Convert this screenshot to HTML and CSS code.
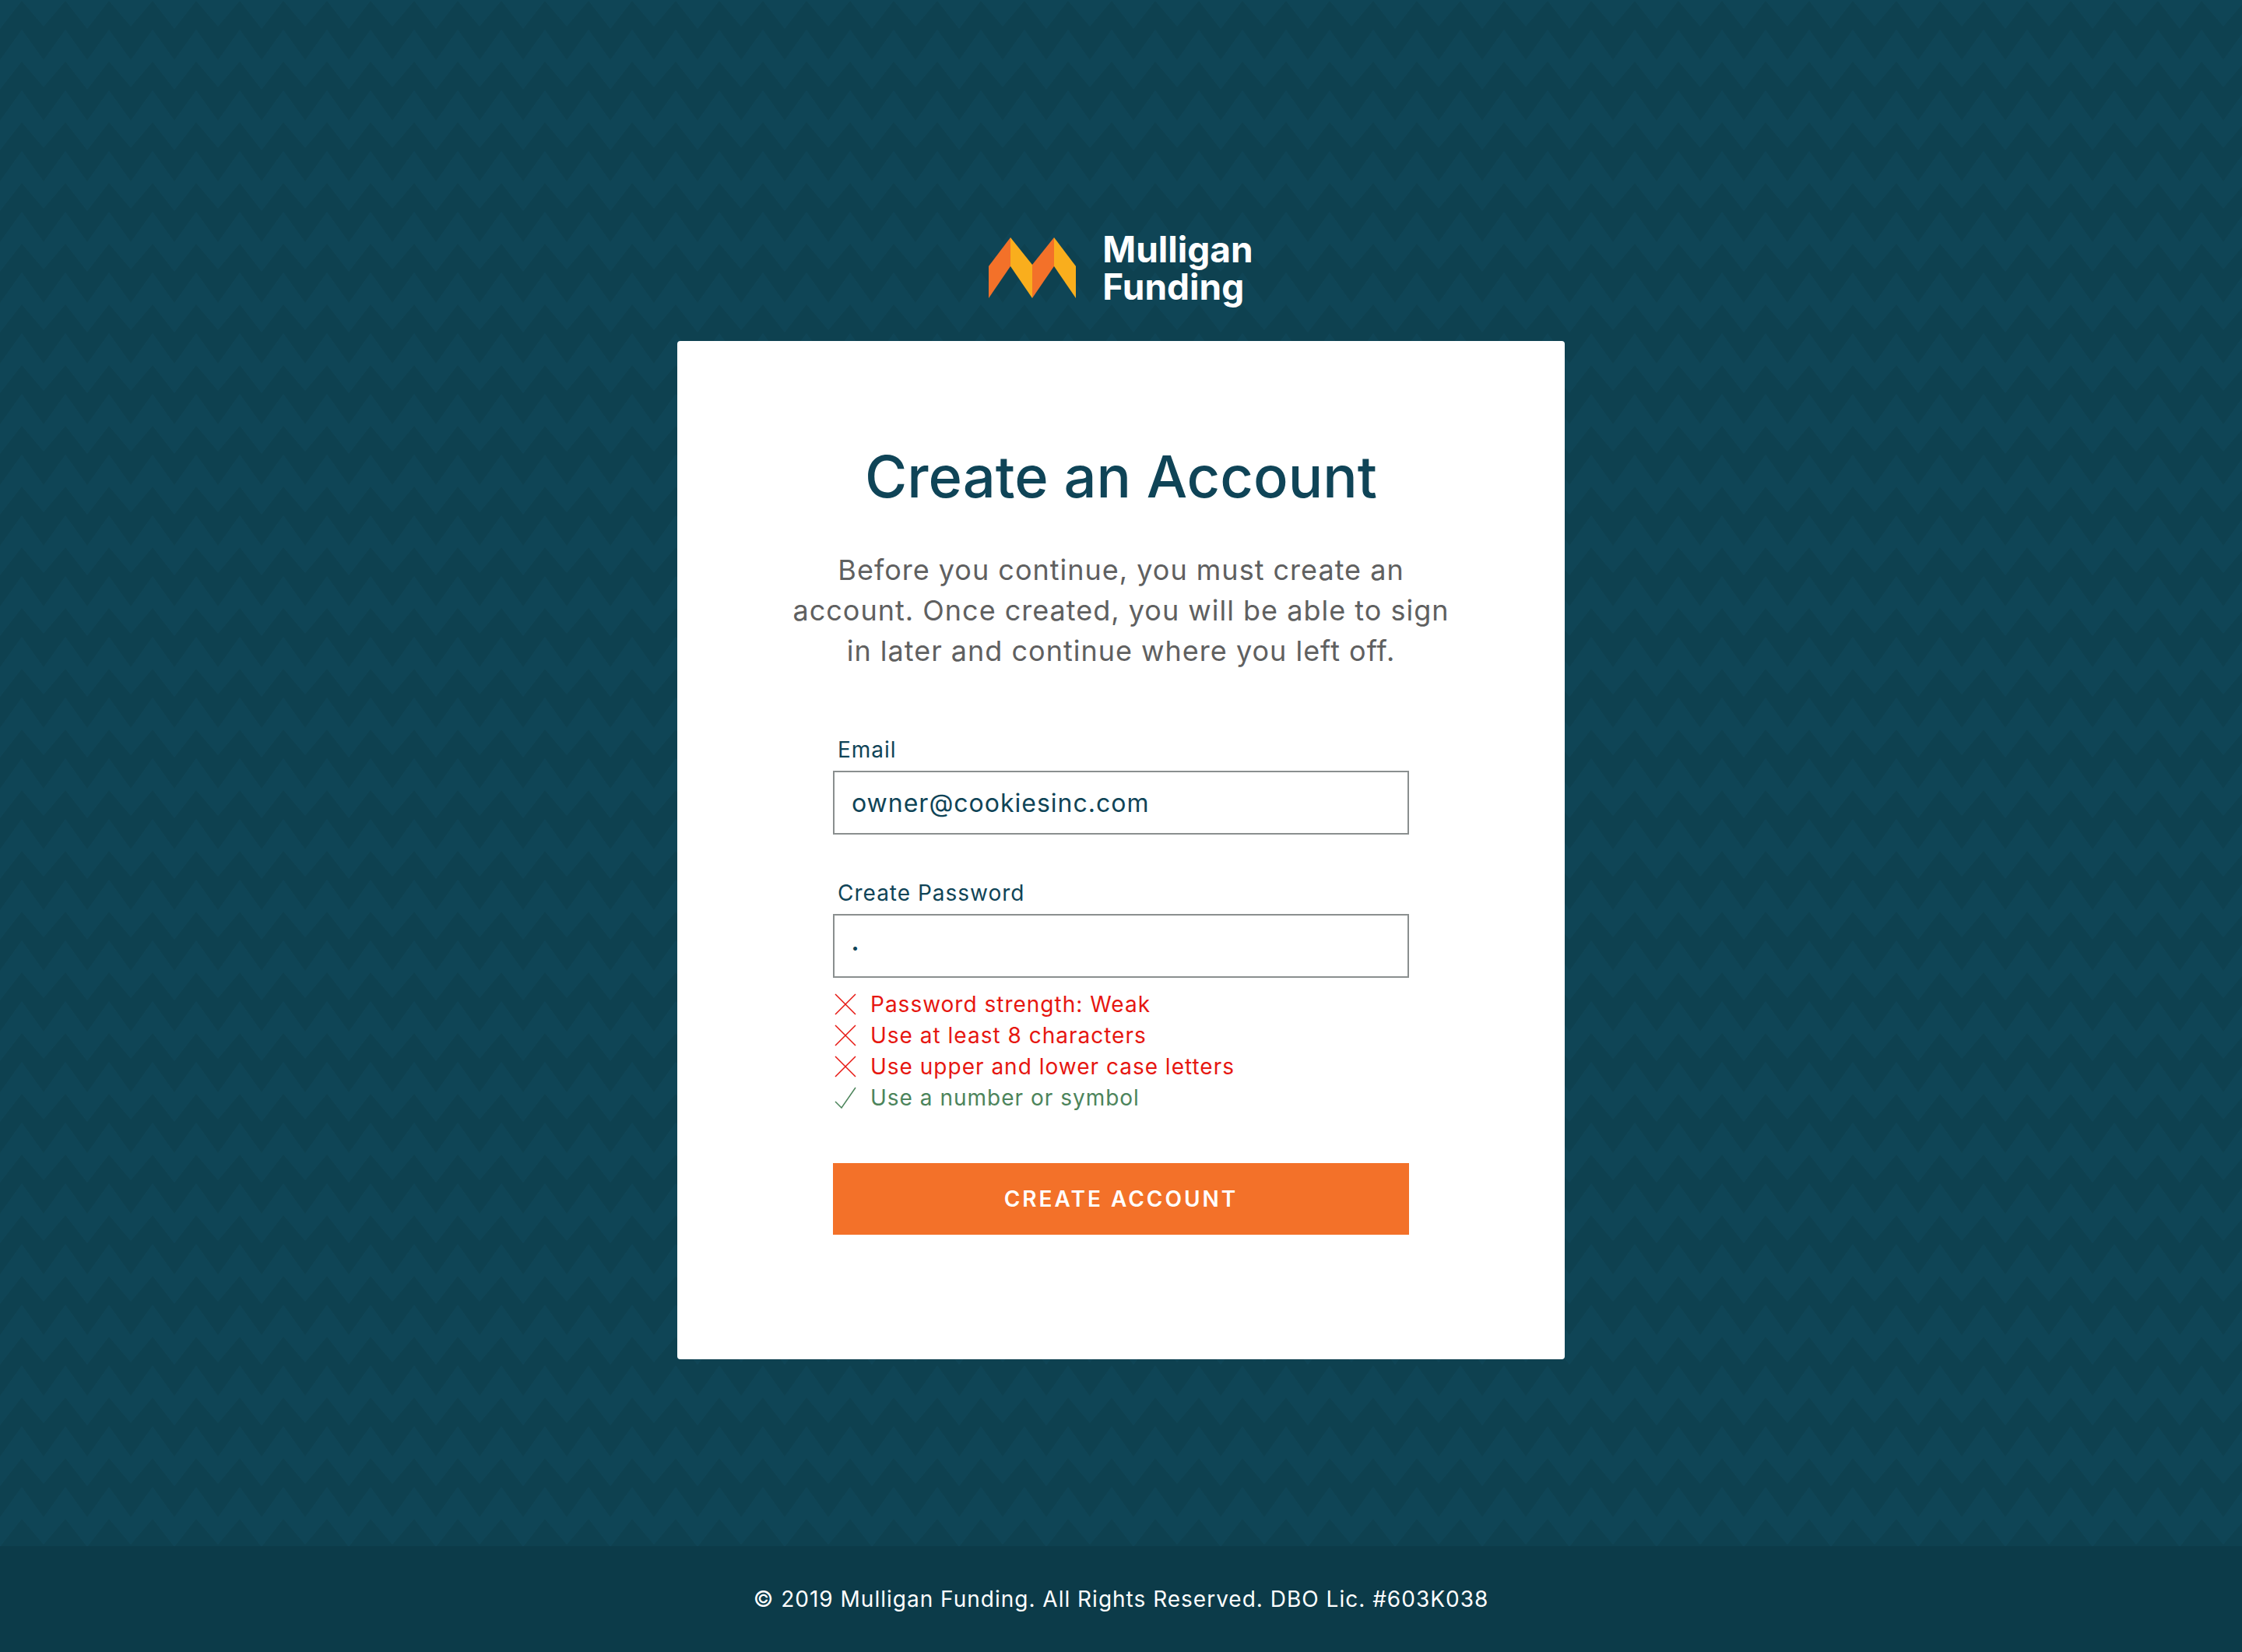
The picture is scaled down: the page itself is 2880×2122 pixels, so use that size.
FILE: index.html
```html
<!DOCTYPE html>
<html lang="en">
<head>
  <meta charset="utf-8">
  <meta name="viewport" content="width=device-width, initial-scale=1">
  <title>Create an Account</title>
  <link rel="stylesheet" href="styles.css">
</head>
<body>
  <svg class="sprite" aria-hidden="true">
    <symbol id="cross" viewBox="0 0 28 28"><path d="M1 1l26 26M27 1L1 27"/></symbol>
    <symbol id="check" viewBox="0 0 28 28"><path d="M1 19l8 8L27 1"/></symbol>
  </svg>
  <main class="page">
    <div class="brand">
      <svg class="brand-mark" viewBox="0 0 112 78" aria-hidden="true">
        <path fill="#f37129" d="M0 37L28 0v37L0 78z"/>
        <path fill="#f9ae1d" d="M28 0l28 35v43L28 37z"/>
        <path fill="#f37129" d="M56 35L84 0v37L56 78z"/>
        <path fill="#f9ae1d" d="M84 0l28 37v41L84 37z"/>
      </svg>
      <span class="brand-name">Mulligan<br>Funding</span>
    </div>
    <section class="card">
      <h1 class="title">Create an Account</h1>
      <p class="intro">Before you continue, you must create an<br>account. Once created, you will be able to sign<br>in later and continue where you left off.</p>
      <form class="form">
        <div class="field">
          <label class="label" for="email">Email</label>
          <input class="input" id="email" type="email" value="owner@cookiesinc.com">
        </div>
        <div class="field">
          <label class="label" for="password">Create Password</label>
          <input class="input input-password" id="password" type="password" value="1" aria-describedby="rules">
        </div>
        <ul class="rules" id="rules">
          <li class="rule"><svg class="rule-icon"><use href="#cross"/></svg>Password strength: Weak</li>
          <li class="rule"><svg class="rule-icon"><use href="#cross"/></svg>Use at least 8 characters</li>
          <li class="rule"><svg class="rule-icon"><use href="#cross"/></svg>Use upper and lower case letters</li>
          <li class="rule rule-met"><svg class="rule-icon"><use href="#check"/></svg>Use a number or symbol</li>
        </ul>
        <button class="submit" type="submit">CREATE ACCOUNT</button>
      </form>
    </section>
  </main>
  <footer class="footer">© 2019 Mulligan Funding. All Rights Reserved. DBO Lic. #603K038</footer>
</body>
</html>
```
FILE: styles.css
```css
* {
  box-sizing: border-box;
}

body {
  margin: 0;
  min-height: 100vh;
  display: flex;
  flex-direction: column;
  font-family: Inter, "Open Sans", sans-serif;
  font-size: 28px;
  letter-spacing: 1px;
  color: #0f4457;
  background: #0f4556 url("data:image/svg+xml,%3Csvg xmlns='http://www.w3.org/2000/svg' width='112' height='78'%3E%3Cpath fill='%230e4150' d='M0 37L28 1L56 34L84 1L112 37V77L84 38L56 77L28 38L0 77z'/%3E%3C/svg%3E");
}

.sprite {
  display: none;
}

.page {
  flex: 1;
  display: flex;
  flex-direction: column;
  align-items: center;
  padding: 296px 24px 160px;
}

.brand {
  display: flex;
  align-items: center;
  gap: 34px;
  margin-bottom: 46px;
}

.brand-mark {
  width: 112px;
  height: 78px;
}

.brand-name {
  font-size: 46px;
  font-weight: 700;
  line-height: 48px;
  letter-spacing: normal;
  color: #fff;
}

.card {
  width: 100%;
  max-width: 1140px;
  padding: 128px 120px 160px;
  border-radius: 4px;
  background: #fff;
}

.title {
  margin: 0 0 48px;
  font-size: 74px;
  font-weight: 500;
  line-height: 92px;
  letter-spacing: normal;
  text-align: center;
}

.intro {
  margin: 0 0 82px;
  font-size: 36px;
  line-height: 52px;
  text-align: center;
  color: #5f6060;
}

.form {
  max-width: 740px;
  margin: 0 auto;
}

.field + .field {
  margin-top: 56px;
}

.label {
  display: block;
  margin-bottom: 8px;
  padding-left: 6px;
  line-height: 38px;
}

.input {
  display: block;
  width: 100%;
  height: 82px;
  padding: 0 22px;
  border: 2px solid #8a8f8f;
  border-radius: 0;
  font: inherit;
  font-size: 32px;
  letter-spacing: inherit;
  color: inherit;
  background: #fff;
}

.input-password {
  padding-top: 4px;
  font-size: 16px;
}

.rules {
  margin: 14px 0 64px;
  padding: 0;
  list-style: none;
}

.rule {
  display: flex;
  align-items: center;
  gap: 18px;
  padding-left: 2px;
  line-height: 40px;
  color: #e61610;
}

.rule-met {
  color: #4c845b;
}

.rule-icon {
  width: 28px;
  height: 28px;
  fill: none;
  stroke: currentColor;
  stroke-width: 1.5;
}

.submit {
  display: block;
  width: 100%;
  height: 92px;
  border: 0;
  font: inherit;
  font-weight: 600;
  letter-spacing: 3px;
  color: #fff;
  background: #f37129;
}

.footer {
  padding: 48px 24px;
  line-height: 40px;
  text-align: center;
  color: #fff;
  background: #0c3b49;
}
```
